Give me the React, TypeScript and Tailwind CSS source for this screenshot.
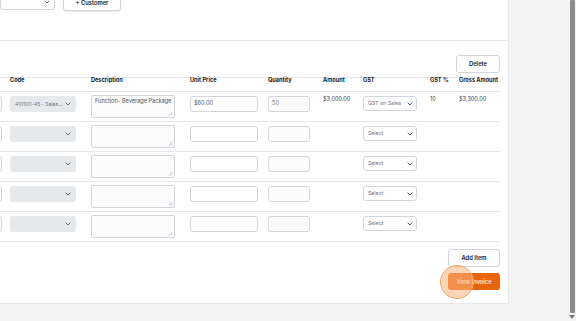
import React from "react";

const Chevron = ({ className = "" }: { className?: string }) => (
  <svg viewBox="0 0 10 6" className={className} fill="none" stroke="currentColor" strokeWidth="1.4" strokeLinecap="round" strokeLinejoin="round">
    <path d="M1.5 1.2 L5 4.6 L8.5 1.2" />
  </svg>
);

const Resize = () => (
  <svg viewBox="0 0 6 6" className="absolute right-[1px] bottom-[1px] w-[5px] h-[5px] text-gray-400" stroke="currentColor" strokeWidth="0.7">
    <path d="M5.5 1 L1 5.5 M5.5 3.5 L3.5 5.5" />
  </svg>
);

const cols = "grid grid-cols-[10px_81px_99px_78px_55px_40px_67px_29px_41px] items-start";

function Row({ first }: { first?: boolean }) {
  return (
    <div className={`${cols} h-[30px] border-b border-gray-200 pt-[3px]`}>
      <div className="relative h-full">
        <div className="absolute right-[8px] top-[1px] w-[40px] h-[16px] border border-gray-300 rounded-[3px]" />
      </div>
      <div className="pt-[1px]">
        <div className="w-[66px] h-[16px] rounded-[3px] bg-[#e6e9ec] flex items-center pl-[5px] pr-[5px] justify-between">
          <span className="block text-[5px] text-gray-500 whitespace-nowrap">{first ? "410100-45 - Sales..." : ""}</span>
          <Chevron className="w-[6px] h-[4px] text-gray-600" />
        </div>
      </div>
      <div>
        <div className="relative w-[84px] h-[23px] border border-gray-300 rounded-[2px] bg-[#fbfbfb] px-[3px] pt-[3px]">
          <span className="block text-[5.6px] text-gray-600 whitespace-nowrap">{first ? "Function- Beverage Package" : ""}</span>
          <Resize />
        </div>
      </div>
      <div className="pt-[1px]">
        <div className="w-[68px] h-[16px] border border-gray-300 rounded-[3px] flex items-center px-[3px]">
          <span className="block text-[5.6px] text-gray-600">{first ? "$60.00" : ""}</span>
        </div>
      </div>
      <div className="pt-[1px]">
        <div className="w-[42px] h-[16px] border border-gray-300 rounded-[3px] bg-[#fcfcfc] flex items-center px-[3px]">
          <span className="block text-[5.6px] text-gray-500">{first ? "50" : ""}</span>
        </div>
      </div>
      <div className="pt-[2px]">
        <span className="block text-[5.6px] text-gray-700">{first ? "$3,000.00" : ""}</span>
      </div>
      <div className="pt-[1px]">
        <div className="w-[54px] h-[15px] border border-gray-300 rounded-[3px] flex items-center justify-between pl-[4px] pr-[3px]">
          <span className="block text-[5.2px] text-gray-500 whitespace-nowrap">{first ? "GST on Sales" : "Select"}</span>
          <Chevron className="w-[6px] h-[4px] text-gray-700" />
        </div>
      </div>
      <div className="pt-[2px]">
        <span className="block text-[5.6px] text-gray-700">{first ? "10" : ""}</span>
      </div>
      <div className="pt-[2px]">
        <span className="block text-[5.6px] text-gray-700 whitespace-nowrap">{first ? "$3,300.00" : ""}</span>
      </div>
    </div>
  );
}

export default function App() {
  return (
    <div className="w-[576px] h-[321px] overflow-hidden flex bg-[#f3f3f4] text-[6px] leading-none" style={{ fontFamily: "Inter, 'Noto Sans', sans-serif" }}>
      <div className="w-[509px] h-full flex flex-col">
        <div className="bg-white h-[304px] border-r border-b border-gray-200 overflow-hidden flex flex-col">
          <div className="h-[49px] shrink-0 border-b border-gray-200 flex items-start gap-[8px] -mt-[8px]">
            <div className="w-[55px] h-[18px] border border-gray-300 rounded-[3px] flex items-end justify-end pr-[4px] pb-[5px]">
              <Chevron className="w-[6px] h-[4px] text-gray-600" />
            </div>
            <div className="w-[58px] h-[19px] border border-gray-300 rounded-[3px] flex items-end justify-center pb-[4px] shadow-[0_0.5px_1px_rgba(0,0,0,0.08)]">
              <span className="block text-[5.8px] font-semibold text-gray-900">+ Customer</span>
            </div>
          </div>
          <div className="flex justify-end pr-[8px] pt-[14px] h-[36px] shrink-0">
            <div className="w-[44px] h-[18px] border border-gray-300 rounded-[3px] flex items-center justify-center">
              <span className="block text-[5.8px] font-semibold text-gray-900">Delete</span>
            </div>
          </div>
          <div className="w-[500px] shrink-0">
            <div className={`${cols} h-[15px] border-t border-b border-gray-200 items-center`}>
              <div />
              {["Code", "Description", "Unit Price", "Quantity", "Amount", "GST", "GST %", "Gross Amount"].map((h) => (
                <span key={h} className="block text-[5.6px] font-bold text-gray-900 whitespace-nowrap">{h}</span>
              ))}
            </div>
            <Row first />
            <Row />
            <Row />
            <Row />
            <Row />
          </div>
          <div className="w-[500px] flex flex-col items-end gap-[6px] pt-[7px]">
            <div className="w-[52px] h-[18px] border border-gray-300 rounded-[3px] flex items-center justify-center bg-white">
              <span className="block text-[5.8px] font-semibold text-gray-900">Add Item</span>
            </div>
            <div className="relative w-[52px] h-[17px] rounded-[3px] bg-[#e8650f] flex items-center justify-center">
              <span className="block text-[5.8px] font-medium text-orange-50">View Invoice</span>
              <div className="absolute left-[-8px] top-[-8px] w-[34px] h-[34px] rounded-full bg-[#f7b27e]/55 border border-[#f3a465]" />
            </div>
          </div>
        </div>
      </div>
      <div className="flex-1" />
      <div className="w-[8px] h-full flex flex-col items-center bg-[#f3f3f4]">
        <div className="w-[5px] h-[313px] bg-[#8c8c8c] rounded-[1px]" />
        <div className="mt-[2px] w-0 h-0 border-l-[3px] border-r-[3px] border-t-[4px] border-l-transparent border-r-transparent border-t-[#7a7a7a]" />
      </div>
    </div>
  );
}
